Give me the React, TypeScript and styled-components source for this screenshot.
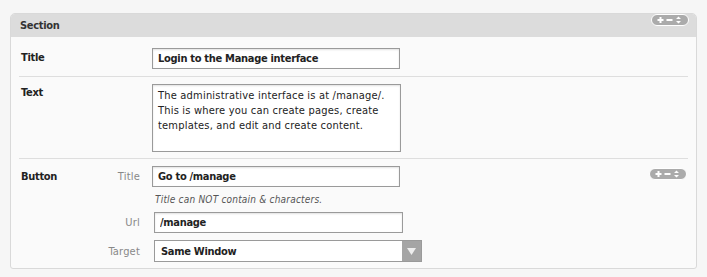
import styled, { createGlobalStyle } from "styled-components";

const GlobalStyle = createGlobalStyle`
  html, body {
    margin: 0;
    padding: 0;
    background: #f6f6f6;
  }
  body {
    font-family: "DejaVu Sans Condensed", "DejaVu Sans", Verdana, sans-serif;
    font-size: 11px;
    letter-spacing: 0.2px;
    color: #222;
  }
`;

const Page = styled.div`
  padding: 13px 10px 0 10px;
  width: 687px;
`;

const Panel = styled.section`
  border: 1px solid #d9d9d9;
  border-radius: 5px 5px 3px 3px;
  background: #fafafa;
  overflow: hidden;
`;

const Header = styled.header`
  height: 23px;
  background: #dcdcdc;
  display: flex;
  align-items: center;
  justify-content: space-between;
  padding: 0 7px 0 9px;
  font-weight: bold;
  letter-spacing: -0.3px;
  color: #333;
`;

const Body = styled.div`
  padding: 0 8px;
`;

const Row = styled.div<{ $top: number; $bottom: number; $last?: boolean }>`
  display: flex;
  align-items: flex-start;
  padding: ${(p) => p.$top}px 0 ${(p) => p.$bottom}px 2px;
  border-bottom: ${(p) => (p.$last ? "none" : "1px solid #dedede")};
`;

const RowLabel = styled.div<{ $width: number; $offset: number }>`
  width: ${(p) => p.$width}px;
  flex: none;
  font-weight: bold;
  letter-spacing: -0.3px;
  color: #222;
  margin-top: ${(p) => p.$offset}px;
`;

const TextInput = styled.input<{ $width: number }>`
  box-sizing: border-box;
  width: ${(p) => p.$width}px;
  height: 21px;
  border: 1px solid #9a9a9a;
  box-shadow: inset 0 1px 2px rgba(0, 0, 0, 0.12);
  background: #fff;
  padding: 0 5px;
  font: bold 11px "DejaVu Sans Condensed", "DejaVu Sans", Verdana, sans-serif;
  letter-spacing: -0.3px;
  color: #222;
  outline: none;
`;

const TextArea = styled.textarea`
  box-sizing: border-box;
  width: 249px;
  height: 68px;
  border: 1px solid #9a9a9a;
  box-shadow: inset 0 1px 2px rgba(0, 0, 0, 0.12);
  background: #fff;
  padding: 3px 5px;
  font: 11px/15px "DejaVu Sans Condensed", "DejaVu Sans", Verdana, sans-serif;
  letter-spacing: 0.2px;
  color: #222;
  resize: none;
  outline: none;
`;

const SubGrid = styled.div`
  flex: 1;
  display: grid;
  grid-template-columns: 59px auto 1fr;
  column-gap: 12px;
  align-items: center;
`;

const SubLabel = styled.div<{ $mt?: number }>`
  text-align: right;
  color: #888;
  grid-column: 1;
  margin-top: ${(p) => p.$mt ?? 0}px;
`;

const Field = styled.div<{ $shift?: number; $mt?: number }>`
  grid-column: 2;
  margin-left: ${(p) => p.$shift ?? 0}px;
  margin-top: ${(p) => p.$mt ?? 0}px;
  display: flex;
`;

const Help = styled.div`
  grid-column: 2;
  font-style: italic;
  font-size: 10px;
  color: #555;
  padding: 6px 0 5px 3px;
  line-height: 14px;
`;

const SelectBox = styled.div`
  display: flex;
  width: 268px;
  height: 22px;
  box-sizing: border-box;
  border: 1px solid #9a9a9a;
  background: #fff;
`;

const SelectValue = styled.div`
  flex: 1;
  display: flex;
  align-items: center;
  padding-left: 6px;
  font-weight: bold;
  letter-spacing: -0.3px;
`;

const SelectArrow = styled.div`
  width: 19px;
  background: #a5a5a5;
  display: flex;
  align-items: center;
  justify-content: center;
`;

const PillWrap = styled.div<{ $col?: boolean }>`
  grid-column: ${(p) => (p.$col ? 3 : "auto")};
  justify-self: end;
  align-self: start;
  display: flex;
  margin-right: ${(p) => (p.$col ? 1 : 0)}px;
  margin-top: ${(p) => (p.$col ? 2 : 0)}px;
`;

// +, -, and up/down arrows in a rounded grey pill
const Controls = ({ col }: { col?: boolean }) => (
  <PillWrap $col={col}>
    <svg width="38" height="12" viewBox="0 0 38 12">
      <rect x="0.5" y="0.5" width="37" height="11" rx="5.5" fill="#ababab" stroke="#fff" />
      <path d="M9.5 3v6M6.5 6h6" stroke="#fff" strokeWidth="2" />
      <path d="M15.5 6h6" stroke="#fff" strokeWidth="2" />
      <path d="M25 5l2.5-2.5L30 5zM25 7l2.5 2.5L30 7z" fill="#fff" />
    </svg>
  </PillWrap>
);

export default function App() {
  return (
    <Page>
      <GlobalStyle />
      <Panel>
        <Header>
          <span>Section</span>
          <Controls />
        </Header>
        <Body>
          <Row $top={11} $bottom={7}>
            <RowLabel $width={131} $offset={3}>Title</RowLabel>
            <TextInput $width={248} defaultValue="Login to the Manage interface" readOnly />
          </Row>
          <Row $top={7} $bottom={6}>
            <RowLabel $width={131} $offset={2}>Text</RowLabel>
            <TextArea
              readOnly
              defaultValue="The administrative interface is at /manage/. This is where you can create pages, create templates, and edit and create content."
            />
          </Row>
          <Row $top={7} $bottom={6} $last>
            <RowLabel $width={60} $offset={4}>Button</RowLabel>
            <SubGrid>
              <SubLabel>Title</SubLabel>
              <Field>
                <TextInput $width={248} defaultValue="Go to /manage" readOnly />
              </Field>
              <Controls col />
              <Help>Title can NOT contain &amp; characters.</Help>
              <SubLabel>Url</SubLabel>
              <Field $shift={2}>
                <TextInput $width={249} defaultValue="/manage" readOnly />
              </Field>
              <SubLabel $mt={7}>Target</SubLabel>
              <Field $shift={2} $mt={7}>
                <SelectBox>
                  <SelectValue>Same Window</SelectValue>
                  <SelectArrow>
                    <svg width="9" height="7" viewBox="0 0 9 7">
                      <path d="M0 0h9L4.5 7z" fill="#eee" />
                    </svg>
                  </SelectArrow>
                </SelectBox>
              </Field>
            </SubGrid>
          </Row>
        </Body>
      </Panel>
    </Page>
  );
}
